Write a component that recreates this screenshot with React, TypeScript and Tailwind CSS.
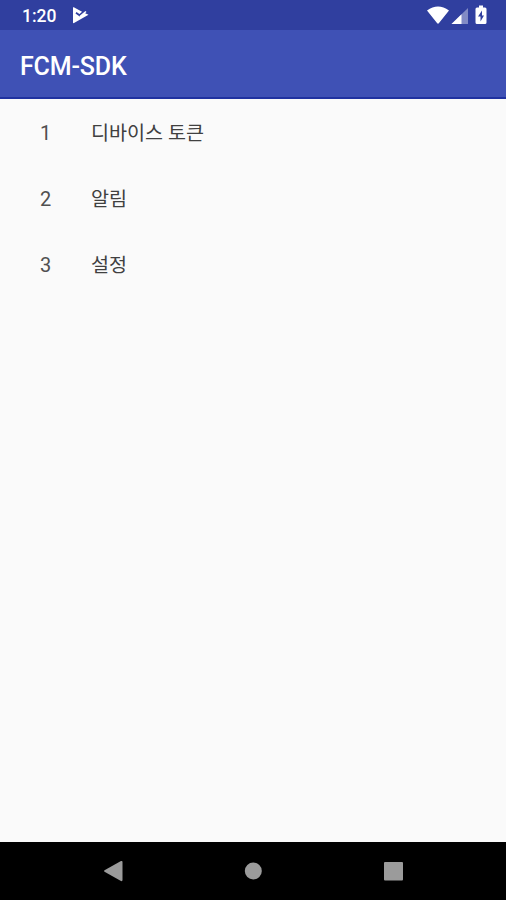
import React from 'react';

const items = ['디바이스 토큰', '알림', '설정'];

const StatusBar: React.FC = () => (
  <div className="flex h-[30px] shrink-0 items-center justify-between bg-[#303f9f] pl-[22px] pr-[18px] text-white">
    <div className="flex items-center">
      <span className="w-[50px] pt-0.5 text-[17.5px] font-medium leading-[30px]">1:20</span>
      <svg className="h-[18px] w-[17px]" viewBox="0 0 17 18" fill="currentColor">
        <path d="M1 1.5 Q1 1 1.8 1.3 L10.5 6 L16.5 8.800 L2 17 Q1 17.500 1 16.500 Z" />
        <path d="M4 6.800 L7.600 9.200 L13 4.500" fill="none" stroke="#303f9f" strokeWidth="1.900" />
        <path d="M8 10.700 L14 5.500" fill="none" stroke="currentColor" strokeWidth="1.600" />
      </svg>
    </div>
    <svg className="h-5 w-[61px]" viewBox="0 0 61 20" fill="currentColor">
      <path d="M0 5.5 Q11 -2.5 22 5.5 L12 18 Q11 19.5 10 18 Z" />
      <path d="M24.500 19 L41 3 V19 Z" opacity="0.4" />
      <path d="M24.500 19 L34.500 9.300 V19 Z" />
      <path
        fillRule="evenodd"
        d="M52 .5h4v2h2q1.500 0 1.500 1.500v13.500q0 1.500-1.500 1.500h-8q-1.500 0-1.500-1.500V4q0-1.500 1.500-1.500h2z M55 5.500l-4 6h2.500v5l3.500-6H55z"
      />
    </svg>
  </div>
);

const App: React.FC = () => {
  return (
    <div className="flex h-[900px] w-[506px] flex-col overflow-hidden bg-[#fafafa] font-[Roboto,'Noto_Sans_CJK_KR',sans-serif]">
      <StatusBar />
      <header className="flex h-[69px] shrink-0 items-center border-b-2 border-[#2032a0] bg-[#3f51b5] pl-5 pt-1.5">
        <h1 className="text-[25px] font-medium leading-none tracking-[-0.15px] text-white">FCM-SDK</h1>
      </header>

      <main className="flex-1 pt-px">
        {items.map((label, i) => (
          <div key={label} className="flex h-[66px] items-center pl-10 text-[20px] leading-[66px] text-[#505050]">
            <span className="w-[51px]">{i + 1}</span>
            <span className="pt-0.5 text-[19.6px] text-[#404040]">{label}</span>
          </div>
        ))}
      </main>

      <nav className="flex h-[58px] shrink-0 items-center justify-center bg-black text-[#9b9b9b]">
        <svg className="h-[22px] w-[300px]" viewBox="0 0 300 22" fill="currentColor">
          <path d="M1.500 10.300 L18 1 Q19.500 .5 19.500 2 V20 Q19.500 21.500 18 21 L1.500 11.700 Q.5 11 1.500 10.300 Z" />
          <circle cx="150.300" cy="11" r="8.500" />
          <rect x="281" y="2" width="19" height="18.500" rx="1" />
        </svg>
      </nav>
    </div>
  );
};

export default App;
